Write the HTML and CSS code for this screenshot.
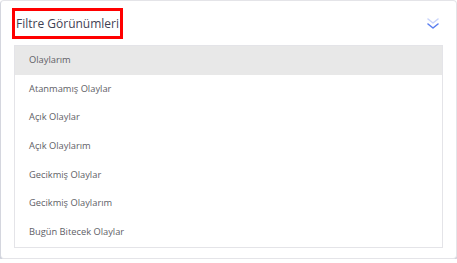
FILE: index.html
```html
<!DOCTYPE html>
<html>
<head>
  <meta charset="UTF-8">
  <title>Filtre Görünümleri</title>
  <link rel="stylesheet" href="styles.css">
</head>
<body>
  <div class="card">
    <div class="card-header">
      <h3 class="card-title">Filtre Görünümleri</h3>
      <button class="btn-toggle" aria-label="Daralt">
        <svg width="14" height="14" viewBox="0 0 14 14" fill="none" stroke-width="1.6" stroke-linecap="round" stroke-linejoin="round">
          <polyline points="2,2 7,6 12,2" stroke="#c9d4fb"/>
          <polyline points="2,7 7,11 12,7" stroke="#5a7ef0"/>
        </svg>
      </button>
    </div>
    <ul class="view-list">
      <li class="view-item active">Olaylarım</li>
      <li class="view-item">Atanmamış Olaylar</li>
      <li class="view-item">Açık Olaylar</li>
      <li class="view-item">Açık Olaylarım</li>
      <li class="view-item">Gecikmiş Olaylar</li>
      <li class="view-item">Gecikmiş Olaylarım</li>
      <li class="view-item">Bugün Bitecek Olaylar</li>
    </ul>
  </div>
</body>
</html>
```

FILE: styles.css
```css
:root {
  --text-color: #3f4254;
  --item-color: #5e5e66;
  --border-color: #e4e4e8;
  --active-bg: #e8e8e8;
  --accent: #5a7ef0;
}

body {
  margin: 0;
  background-color: #ffffff;
  font-family: "Open Sans", Arial, sans-serif;
}

.card {
  height: 259px;
  box-sizing: border-box;
  border: 1px solid var(--border-color);
  border-left-color: #d4d6de;
  border-radius: 4px;
  box-shadow: 0 2px 0 #c9cdd8;
  background-color: #ffffff;
  padding: 0 13px 0 13px;
}

.card-header {
  display: flex;
  justify-content: space-between;
  align-items: flex-start;
  height: 44px;
  padding-top: 7px;
  box-sizing: border-box;
}

.card-title {
  margin: 0 0 0 -2px;
  font-size: 12px;
  font-weight: 500;
  color: var(--text-color);
  border: 3px solid #ff0000;
  padding: 4px 1px 4px 1px;
}

.btn-toggle {
  background: none;
  border: none;
  padding: 0;
  margin: 9px 3px 0 0;
  cursor: pointer;
  display: flex;
}

.view-list {
  list-style: none;
  margin: 0;
  padding: 0;
  border: 1px solid var(--border-color);
}

.view-item {
  height: 28.7px;
  line-height: 28.7px;
  padding-left: 14px;
  font-size: 9.3px;
  color: var(--item-color);
}

.view-item.active {
  background-color: var(--active-bg);
}
```
